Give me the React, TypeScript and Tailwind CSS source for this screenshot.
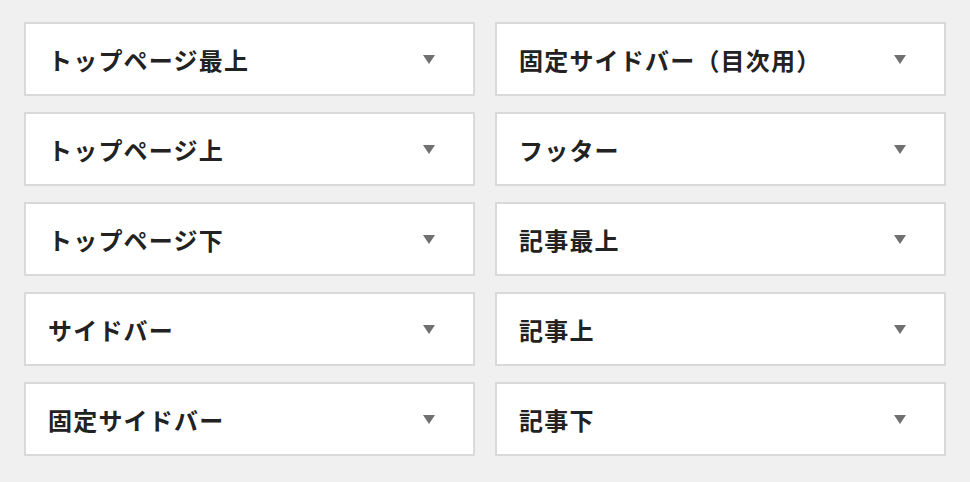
import React from "react";

const left = ["トップページ最上", "トップページ上", "トップページ下", "サイドバー", "固定サイドバー"];
const right = ["固定サイドバー（目次用）", "フッター", "記事最上", "記事上", "記事下"];

function Card({ label }: { label: string }) {
  return (
    <div className="h-[74px] bg-white border-2 border-[#d9d9d9] flex items-center justify-between pl-[22px] pr-[38px]">
      <span className="text-[24px] font-bold text-[#222] leading-none tracking-[1.2px] mt-[2px]">{label}</span>
      <svg width="12" height="9" viewBox="0 0 12 9">
        <polygon points="0,0 12,0 6,9" fill="#707070" />
      </svg>
    </div>
  );
}

export default function App() {
  return (
    <div
      className="w-[970px] h-[482px] bg-[#f0f0f0] pt-[22px] px-[24px]"
      style={{ fontFamily: '"Noto Sans CJK JP", "Noto Sans", sans-serif' }}
    >
      <div className="grid grid-cols-2 gap-x-[20px] gap-y-[16px]">
        {left.map((l, i) => (
          <React.Fragment key={i}>
            <Card label={l} />
            <Card label={right[i]} />
          </React.Fragment>
        ))}
      </div>
    </div>
  );
}
